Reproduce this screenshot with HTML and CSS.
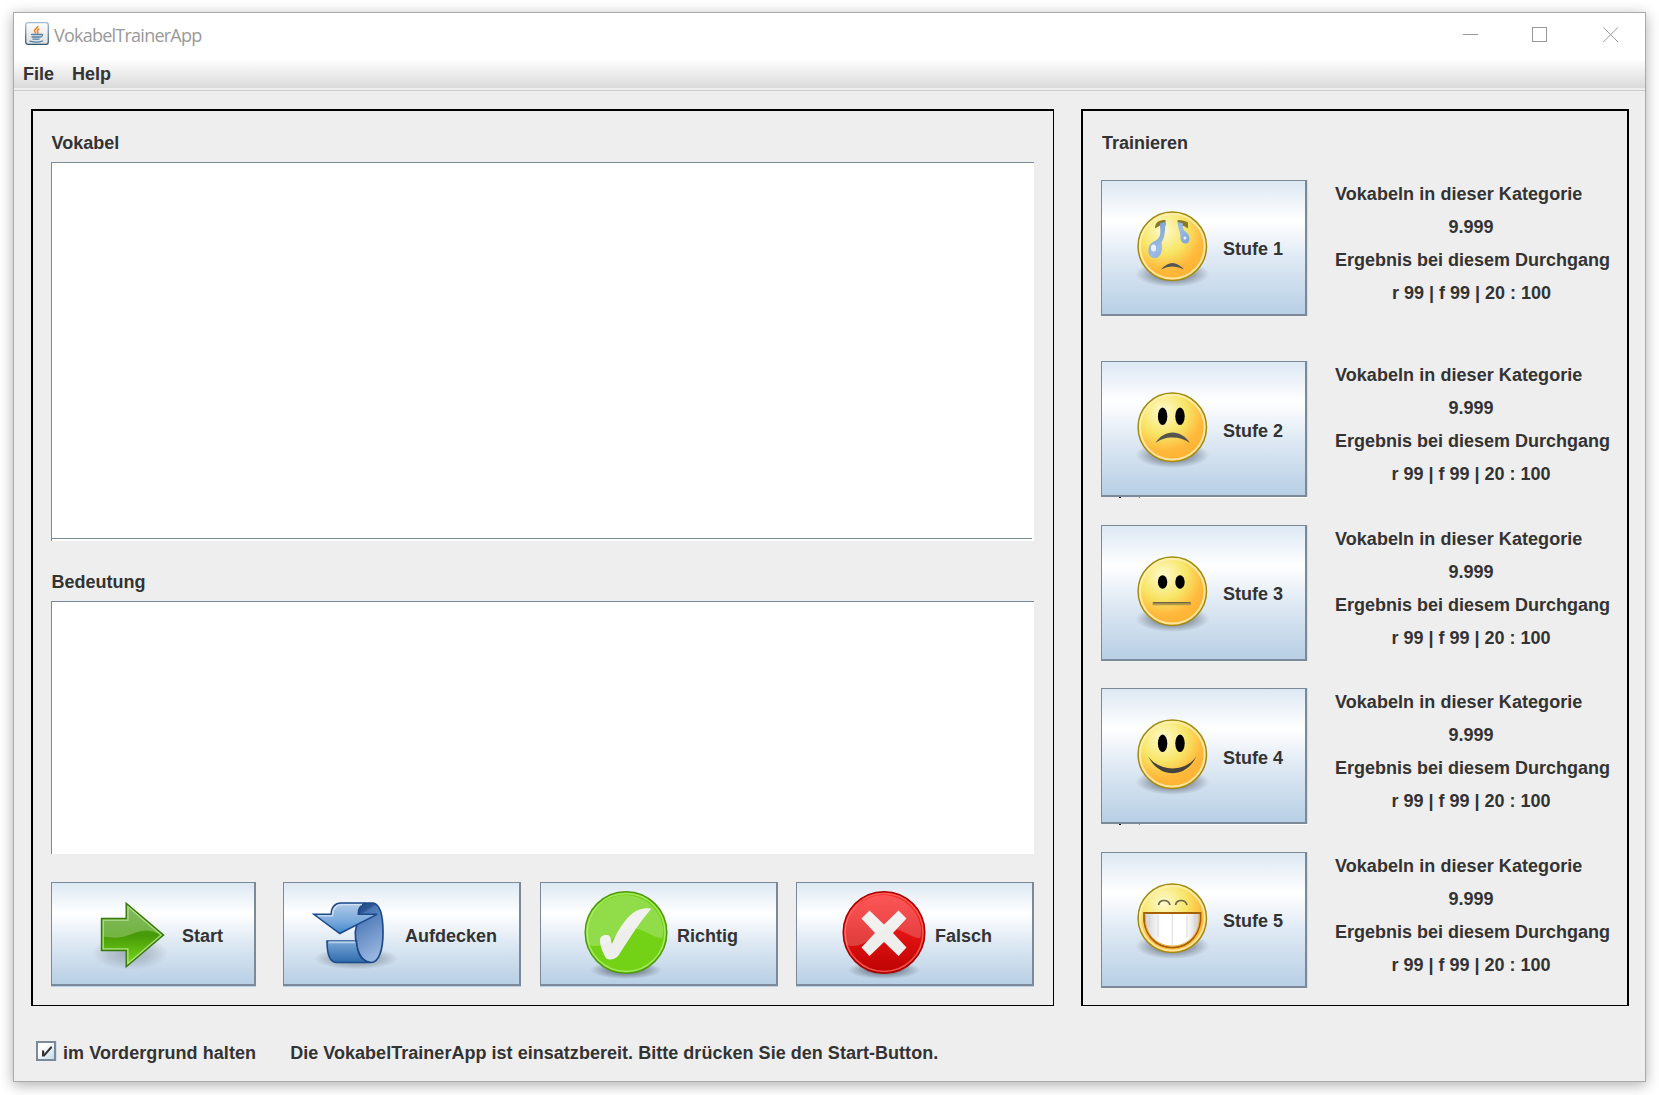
FILE: index.html
```
<!DOCTYPE html>
<html lang="de">
<head>
<meta charset="utf-8">
<title>VokabelTrainerApp</title>
<link rel="stylesheet" href="styles.css">
</head>
<body>
<svg class="defs" width="0" height="0" aria-hidden="true">
  <defs>
    <radialGradient id="skin" cx="0.37" cy="0.27" r="0.68">
      <stop offset="0" stop-color="#fffbd0"/><stop offset="0.5" stop-color="#f7e566"/><stop offset="0.84" stop-color="#ffb93c"/><stop offset="1" stop-color="#ffb435"/>
    </radialGradient>
    <radialGradient id="shade">
      <stop offset="0" stop-color="#39414c" stop-opacity="0.75"/><stop offset="0.55" stop-color="#39414c" stop-opacity="0.4"/><stop offset="1" stop-color="#39414c" stop-opacity="0"/>
    </radialGradient>
    <linearGradient id="tear" x1="0" y1="0" x2="1" y2="1">
      <stop offset="0" stop-color="#6f97c6"/><stop offset="0.5" stop-color="#9dbce6"/><stop offset="1" stop-color="#5f92cf"/>
    </linearGradient>
    <linearGradient id="teeth">
      <stop offset="0" stop-color="#cfcfcf"/><stop offset="0.3" stop-color="#fff"/><stop offset="0.75" stop-color="#fff"/><stop offset="1" stop-color="#c8c8c8"/>
    </linearGradient>
    <linearGradient id="arrowGreen" x1="0" y1="0" x2="0" y2="1">
      <stop offset="0" stop-color="#63a33a"/><stop offset="0.5" stop-color="#479a08"/><stop offset="1" stop-color="#7bdc1a"/>
    </linearGradient>
    <linearGradient id="ribbonFront" x1="0" y1="0" x2="0" y2="1">
      <stop offset="0" stop-color="#b3cbe8"/><stop offset="0.6" stop-color="#78a9dc"/><stop offset="1" stop-color="#3f86ca"/>
    </linearGradient>
    <linearGradient id="ribbonBack" x1="0" y1="0" x2="0.3" y2="1">
      <stop offset="0" stop-color="#274f8d"/><stop offset="0.2" stop-color="#2b558f"/><stop offset="0.25" stop-color="#4a77b5"/><stop offset="1" stop-color="#94b3df"/>
    </linearGradient>
    <linearGradient id="ribbonFoot" x1="0" y1="0" x2="0" y2="1">
      <stop offset="0" stop-color="#7aa6d6"/><stop offset="1" stop-color="#2e6cad"/>
    </linearGradient>
    <linearGradient id="red" x1="0" y1="0" x2="0" y2="1">
      <stop offset="0" stop-color="#ff2f2f"/><stop offset="0.5" stop-color="#e31313"/><stop offset="1" stop-color="#bd0303"/>
    </linearGradient>
    <g id="face">
      <ellipse cx="38.5" cy="66" rx="37" ry="13" fill="url(#shade)"/>
      <circle cx="38.3" cy="38.3" r="34.2" fill="url(#skin)" stroke="#a08c10" stroke-width="1.5"/>
      <circle cx="38.3" cy="38.3" r="32.3" fill="none" stroke="#fff1b8" stroke-opacity="0.8" stroke-width="2"/>
    </g>
  </defs>
</svg>

<main class="window">
  <header class="titlebar">
    <svg class="app-icon" width="24" height="23" viewBox="0 0 24 23">
      <defs><linearGradient id="frame" x1="0" y1="0" x2="0" y2="1"><stop offset="0" stop-color="#9dbbd3"/><stop offset="1" stop-color="#35566f"/></linearGradient>
      <linearGradient id="plate" x1="0" y1="0" x2="0" y2="1"><stop offset="0" stop-color="#fff"/><stop offset="1" stop-color="#dcdcdc"/></linearGradient></defs>
      <rect x="0.7" y="0.7" width="22.6" height="21.6" rx="2.2" fill="url(#plate)" stroke="url(#frame)" stroke-width="1.3"/>
      <path d="M12.8 3.8C13.4 6 9 7 9.4 9c.1 1 1.2 1.6 1.4 2.4M14.4 7c-2 1-2.6 1.800-1.6 3 .4.6 0 1.100-.8 1.600" fill="none" stroke="#ee8022" stroke-width="1.500"/>
      <path d="M6.500 12.500h9.500M7 15h8M8 17.200h6M5 19.200c3.500 1 9.500 1 12.500-.2M16 12.300c2.200-.4 2 2-.7 2.800" fill="none" stroke="#5481a5" stroke-width="1.300" stroke-linecap="round"/>
    </svg>
    <span class="title">VokabelTrainerApp</span>
    <svg class="controls" width="156" height="16" viewBox="0 0 156 16" fill="none" stroke="#999">
      <path d="M0 7.500h15"/><rect x="69.500" y="0.500" width="14" height="14"/><path d="M140.300 0.300l14.700 14.700M155 0.300L140.300 15"/>
    </svg>
  </header>
  <nav class="menubar"><span>File</span><span>Help</span></nav>

  <div class="panels">
    <section class="panel words">
      <h2>Vokabel</h2>
      <div class="field field-word"></div>
      <h2 class="meaning">Bedeutung</h2>
      <div class="field field-meaning"></div>
      <div class="actions">
        <button class="btn start">
          <svg width="80" height="76" viewBox="0 0 80 76">
            <ellipse cx="37" cy="54" rx="38" ry="17" fill="url(#shade)" opacity="0.45"/>
            <path d="M8.500 19.500H33.200V4.200L70.600 36 33.200 67.800V51.500H8.500z" fill="url(#arrowGreen)" stroke="#36790a" stroke-width="1.400"/>
            <path d="M10 21H34.700V7.400L68 36C54 28 46 32 36 36S19 38.500 10 37.500z" fill="#b7dc9c" opacity="0.4"/>
            <path d="M10.200 21.200H34.900V7.600L68.200 36 34.900 64.400V49.800H10.200z" fill="none" stroke="#c4e8a4" stroke-opacity="0.8" stroke-width="1.300"/>
          </svg>
          <span>Start</span>
        </button>
        <button class="btn reveal">
          <svg width="88" height="76" viewBox="0 0 88 76">
            <ellipse cx="45" cy="59.500" rx="42" ry="11" fill="url(#shade)" opacity="0.7"/>
            <path d="M48 14C48.500 8 50 4 56 4h6C69 5 72 16 72 33.500S68 63.300 60 63.500C50 63 44.500 51 44.300 33z" fill="url(#ribbonBack)" stroke="#1d4b8a" stroke-width="1.700"/>
            <path d="M16 42H45.500C46 53 50 62 59 63.500H25C18.500 63 16 54 16 42z" fill="url(#ribbonFoot)" stroke="#1d4b8a" stroke-width="1.600"/>
            <path d="M17.500 43.300H44" stroke="#b5cfea" stroke-width="2"/>
            <path d="M2.800 15.300H20C20.500 9 23 4 30 4H55C49.500 6 47 10 47.200 15.300H66L28.800 34.500z" fill="url(#ribbonFront)" stroke="#1d4b8a" stroke-width="1.500"/>
            <path d="M7 16.800H21.500C21.800 10 25 5.600 31 5.600H51" fill="none" stroke="#d2e2f4" stroke-width="1.300"/>
          </svg>
          <span>Aufdecken</span>
        </button>
        <button class="btn right">
          <svg width="90" height="94" viewBox="0 0 90 94">
            <ellipse cx="46" cy="84" rx="36" ry="9" fill="url(#shade)"/>
            <circle cx="46" cy="46.500" r="40.800" fill="#73d216" stroke="#4f9a0c" stroke-width="1.500"/>
            <circle cx="46" cy="46.500" r="39" fill="none" stroke="#a4ea5c" stroke-width="1.500"/>
            <path d="M20 54c.3-4 3.500-5.500 7.500-5 3 .6 3.500 4 4.300 9 8-18 18-32 28-34.500 5-1.200 9-1.800 11.500-.7C58 38 46 58 38.500 69.500c-3 4.200-9 4.500-12 3.300C22.500 67 19.800 59 20 54z" fill="#eeeeec"/>
            <path d="M8 58a38.500 38.500 0 1 1 75-17c.5 5 .3 9-1 11-6 1-16-8-29-10-14-1-21 18-38 18-4 0-7-1-7-2z" fill="#fff" opacity="0.22"/>
          </svg>
          <span>Richtig</span>
        </button>
        <button class="btn wrong">
          <svg width="90" height="94" viewBox="0 0 90 94">
            <ellipse cx="46" cy="84" rx="36" ry="9" fill="url(#shade)"/>
            <circle cx="46" cy="46.500" r="40.800" fill="url(#red)" stroke="#a80000" stroke-width="1.500"/>
            <circle cx="46" cy="46.500" r="39" fill="none" stroke="#ff6a62" stroke-opacity="0.8" stroke-width="1.500"/>
            <path d="M31.500 24.500L46 38.500 60.500 24.500 68.500 32.500 55 47 68.500 61.500 60.500 70 46 56 31.500 70 23.500 61.500 37 47 23.500 32.500z" fill="#eeeeec"/>
            <path d="M8 58a38.500 38.500 0 1 1 75-17c.5 5 .3 9-1 11-6 1-16-8-29-10-14-1-21 18-38 18-4 0-7-1-7-2z" fill="#fff" opacity="0.2"/>
          </svg>
          <span>Falsch</span>
        </button>
      </div>
    </section>

    <section class="panel training">
      <h2>Trainieren</h2>
      <div class="level">
        <button class="btn">
          <svg width="76" height="80" viewBox="0 0 76 80"><use href="#face"/>
            <path d="M21 20.500C21 14 25 12 31.500 12V17.500H26zM43.500 12c5 0 8 1 10.500 2.500V20.500l-4-2.500-6-1z" fill="#857a2c"/>
            <path d="M26 15.500l5.500-2C31 22 31.500 28 27.500 34.500c1.500 6 0 15.500-7 15.500S13 41 16.500 36c3-3 8-3.500 9.500-9 .8-4 0-7 0-11.500zM44 14l5 1.500c-.5 4 0 7 3.500 9 4 3 3.500 10.500 0 11s-6.500-2-6-7c0-5-3-8-2.500-14.500z" fill="url(#tear)"/>
            <ellipse cx="19.500" cy="40" rx="2.600" ry="3.500" fill="#e9f2fc"/><circle cx="51" cy="30" r="1.500" fill="#e9f2fc"/>
            <path d="M27 61.500Q38.300 48.500 50 61.500 38.300 55.500 27 61.500z" fill="#555"/>
          </svg>
          <span>Stufe 1</span>
        </button>
        <dl><dt>Vokabeln in dieser Kategorie</dt><dd>9.999</dd><dt class="result">Ergebnis bei diesem Durchgang</dt><dd class="score">r 99 | f 99 | 20 : 100</dd></dl>
      </div>
      <div class="level second overlap">
        <button class="btn">
          <svg width="76" height="80" viewBox="0 0 76 80"><use href="#face"/>
            <ellipse cx="28.600" cy="27.300" rx="4.700" ry="8.700"/><ellipse cx="46" cy="27.300" rx="4.700" ry="8.700"/>
            <path d="M21.500 54C30 40 47 40 56 54 47 46.500 30 46.500 21.500 54z" fill="#55554f"/>
          </svg>
          <span>Stufe 2</span>
        </button>
        <dl><dt>Vokabeln in dieser Kategorie</dt><dd>9.999</dd><dt class="result">Ergebnis bei diesem Durchgang</dt><dd>r 99 | f 99 | 20 : 100</dd></dl>
      </div>
      <div class="level third">
        <button class="btn">
          <svg width="76" height="80" viewBox="0 0 76 80"><use href="#face"/>
            <ellipse cx="28.600" cy="29" rx="4.700" ry="6.700"/><ellipse cx="46" cy="29" rx="4.700" ry="6.700"/>
            <path d="M18.500 49.300h38.500v3h-38.500z" fill="#b39c4a"/><path d="M19 49.700h37.500" stroke="#5a5340"/>
          </svg>
          <span>Stufe 3</span>
        </button>
        <dl><dt>Vokabeln in dieser Kategorie</dt><dd>9.999</dd><dt class="result">Ergebnis bei diesem Durchgang</dt><dd>r 99 | f 99 | 20 : 100</dd></dl>
      </div>
      <div class="level fourth overlap">
        <button class="btn">
          <svg width="76" height="80" viewBox="0 0 76 80"><use href="#face"/>
            <ellipse cx="28.600" cy="27.300" rx="4.700" ry="8.700"/><ellipse cx="46" cy="27.300" rx="4.700" ry="8.700"/>
            <path d="M14 40C25 63 52 63 62.500 40 52 56.500 25 56.500 14 40z" fill="#44443c"/>
          </svg>
          <span>Stufe 4</span>
        </button>
        <dl><dt>Vokabeln in dieser Kategorie</dt><dd>9.999</dd><dt class="result">Ergebnis bei diesem Durchgang</dt><dd>r 99 | f 99 | 20 : 100</dd></dl>
      </div>
      <div class="level fifth">
        <button class="btn">
          <svg width="76" height="80" viewBox="0 0 76 80"><use href="#face"/>
            <path d="M24.500 25c1-6 10-6 11.500 0M41.500 25c1-6 10-6 11.500 0" fill="none" stroke="#6b6748" stroke-width="1.700"/>
            <path d="M10 33H66.500C68 54 55 67.500 38.300 67.500S8.500 54 10 33z" fill="url(#teeth)" stroke="#a46204" stroke-width="1.800"/>
            <path d="M11.500 35V41C12.500 56 24 66 38.300 66S64 56 65 41V35" fill="none" stroke="#f0a93e" stroke-width="1"/>
            <path d="M38.300 34v31M24 35v22M53 35v22M15.500 35v12M61 35v12" stroke="#cfcfcf" stroke-width="0.800"/>
          </svg>
          <span>Stufe 5</span>
        </button>
        <dl><dt>Vokabeln in dieser Kategorie</dt><dd>9.999</dd><dt class="result">Ergebnis bei diesem Durchgang</dt><dd>r 99 | f 99 | 20 : 100</dd></dl>
      </div>
    </section>
  </div>

  <footer class="status">
    <span class="checkbox"><svg width="16" height="16" viewBox="0 0 16 16"><path d="M4 7.500h2.200v3.300L12.500 3.500H14V5L6.500 13.500H4z" fill="#333"/></svg></span>
    <span class="keep">im Vordergrund halten</span>
    <span class="message">Die VokabelTrainerApp ist einsatzbereit. Bitte drücken Sie den Start-Button.</span>
  </footer>
</main>
</body>
</html>
```
FILE: styles.css
```
* { box-sizing: border-box; }
body {
  margin: 0;
  height: 1095px;
  padding: 12px 13px 13px;
  background: #fff;
  color: #333;
  font: bold 18px/20px "Liberation Sans", Arial, sans-serif;
  overflow: hidden;
}
.defs { position: absolute; }
.window {
  display: flex;
  flex-direction: column;
  width: 1633px;
  height: 1070px;
  border: 1px solid #aaa;
  background: #eee;
  box-shadow: 0 3px 13px rgba(0, 0, 0, 0.32);
}
.titlebar {
  display: flex;
  align-items: flex-start;
  height: 46px;
  padding: 9px 26px 0 11px;
  background: #fff;
}
.title {
  margin: 2px auto 0 5px;
  color: #999;
  font: 400 18px/22px "Open Sans", sans-serif;
  letter-spacing: -0.76px;
}
.controls { margin-top: 5px; }
.menubar {
  display: flex;
  gap: 18px;
  height: 32px;
  padding: 5px 9px 0;
  background: linear-gradient(#fff 0, #dadada 29px, #eee 29px, #eee 31px, #ccc 31px);
}
.panels {
  display: flex;
  gap: 27px;
  height: 915px;
  padding: 18px 0 0 17px;
}
.panel { height: 897px; border: solid #000; }
.words { width: 1023px; border-width: 2px 1px 1px 2px; padding: 22px 18px 0; }
.training { width: 548px; border-width: 2px 2px 1px 2px; padding: 22px 0 0 18px; }
h2 { margin: 0; font: inherit; }
.words h2 { padding-left: 0.5px; }
.training h2 { padding-left: 1px; }
.field {
  width: 983px;
  background: #fff;
  border-top: 1px solid #7a8a99;
  border-left: 1px solid #7a8a99;
}
.field-word { height: 379px; margin-top: 9px; padding-top: 375px; }
.field-word::before { content: ""; display: block; width: 980px; height: 1px; background: #7a8a99; }
.meaning { margin-top: 31px; }
.field-meaning { height: 253px; margin-top: 9px; }
.actions { display: flex; height: 105px; margin-top: 28px; }
.btn {
  position: relative;
  display: flex;
  align-items: flex-start;
  margin: 0;
  padding: 0;
  border: solid #7a8a99;
  border-width: 1px 2px 2px 1px;
  background: linear-gradient(#dde8f3, #fff 30%, #dde8f3 60%, #b8cfe5);
  color: inherit;
  font: inherit;
  text-align: left;
  white-space: nowrap;
  box-shadow: 1px 0 #d3deea;
}
.btn svg { flex: none; }
.actions .btn { height: 104px; box-shadow: 0 1px #b8cfe5; }
.actions span { margin-top: 43px; }
.start { width: 205px; padding-left: 41px; }
.start svg, .reveal svg { margin-top: 16px; }
.start span { margin-left: 9px; }
.reveal { width: 238px; margin-left: 27px; padding-left: 27px; }
.reveal span { margin-left: 6px; }
.right { width: 238px; margin-left: 19px; padding-left: 39px; }
.wrong { width: 238px; margin-left: 18px; padding-left: 41px; }
.right svg, .wrong svg { margin-top: 3px; }
.right span, .wrong span { margin-left: 7px; }
.level { position: relative; display: flex; height: 136px; margin-top: 27px; }
.level.second { margin-top: 45px; }
.level.third, .level.fifth { margin-top: 28px; }
.level .btn { width: 206px; height: 136px; padding-left: 32px; }
.level svg { margin-top: 27px; }
.level .btn span { margin: 58px 0 0 13px; }
.level.overlap .btn span { margin-top: 59px; }
.overlap::after {
  content: "";
  position: absolute;
  left: 18px;
  top: 136px;
  width: 189px;
  height: 1px;
  background: linear-gradient(90deg, #111 2px, #eee 2px, #eee 20px, #7a8a99 20px, #7a8a99 21px, #fff 21px);
}
dl {
  width: 272px;
  margin: -2px 0 0 28px;
  line-height: 33px;
  white-space: nowrap;
}
dt { letter-spacing: 0.06px; }
.result { letter-spacing: 0; }
dd { margin: 0; text-align: center; }
.score { padding-left: 1px; }
.status { display: flex; align-items: flex-start; padding: 35px 0 0 22px; }
.checkbox {
  width: 20px;
  height: 20px;
  border: 2px solid #7a8a99;
  background: linear-gradient(135deg, #fff 30%, #c8daeb);
  box-shadow: 1px 0 #d3deea;
}
.checkbox svg { display: block; }
.keep { margin: 2px 0 0 7px; letter-spacing: 0.07px; }
.message { margin: 2px 0 0 34px; letter-spacing: 0.03px; }
```
